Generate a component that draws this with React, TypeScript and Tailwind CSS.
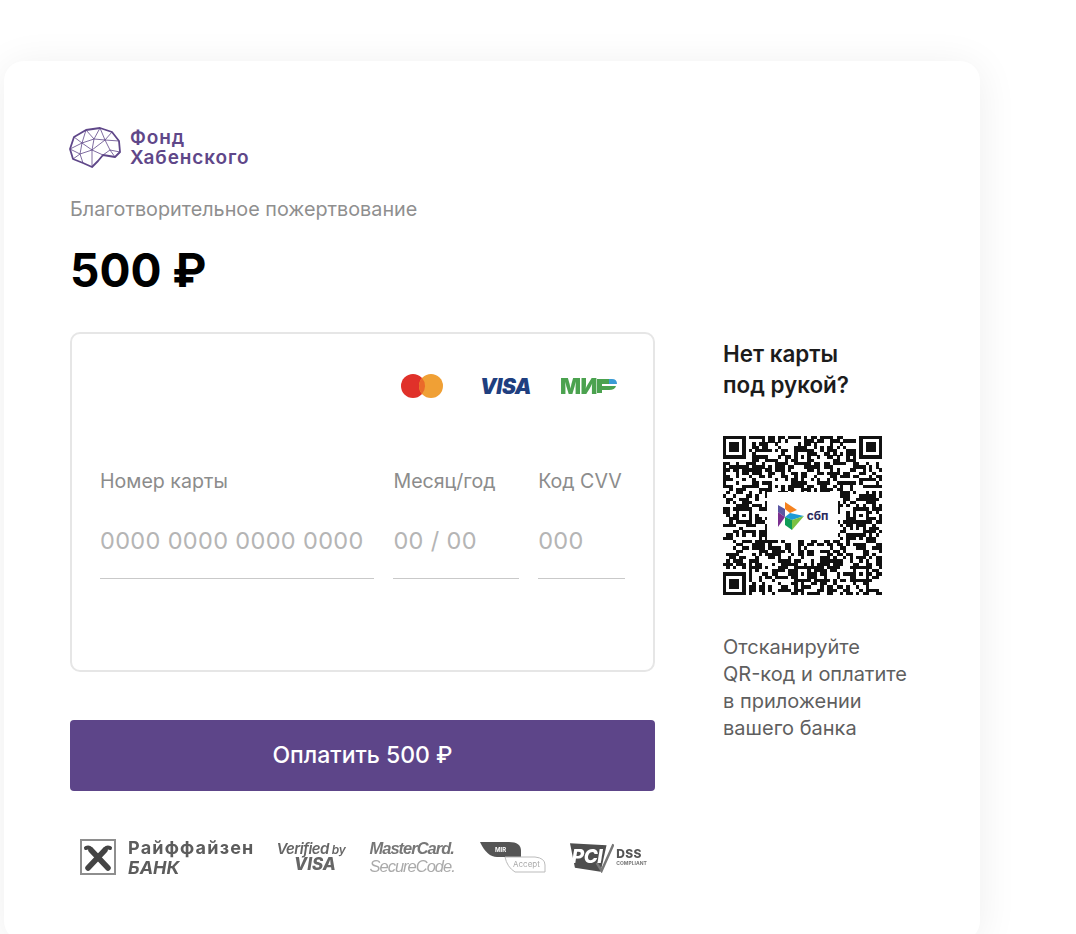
const SIZE = 49

function buildQr() {
  const grid: boolean[][] = []
  let seed = 73421
  for (let y = 0; y < SIZE; y++) {
    const row: boolean[] = []
    for (let x = 0; x < SIZE; x++) {
      seed = (seed * 1103515245 + 12345) & 0x7fffffff
      row.push(((seed >> 16) & 7) > 3)
    }
    grid.push(row)
  }
  const finder = (ox: number, oy: number) => {
    for (let y = -1; y < 8; y++) {
      for (let x = -1; x < 8; x++) {
        const px = ox + x
        const py = oy + y
        if (px < 0 || py < 0 || px >= SIZE || py >= SIZE) continue
        const ring = x >= 0 && x <= 6 && y >= 0 && y <= 6 && (x === 0 || x === 6 || y === 0 || y === 6)
        const core = x >= 2 && x <= 4 && y >= 2 && y <= 4
        grid[py][px] = ring || core
      }
    }
  }
  const align = (cx: number, cy: number) => {
    for (let y = -2; y <= 2; y++) {
      for (let x = -2; x <= 2; x++) {
        grid[cy + y][cx + x] = Math.max(Math.abs(x), Math.abs(y)) !== 1
      }
    }
  }
  finder(0, 0)
  finder(SIZE - 7, 0)
  finder(0, SIZE - 7)
  align(24, 6)
  align(6, 24)
  align(42, 24)
  align(24, 42)
  align(42, 42)
  return grid
}

function QrCode() {
  const grid = buildQr()
  return (
    <div className="relative h-[159px] w-[159px]">
      <svg viewBox={`0 0 ${SIZE} ${SIZE}`} className="h-full w-full blur-[0.5px]" shapeRendering="crispEdges">
        {grid.flatMap((row, y) =>
          row.map((on, x) => (on ? <rect key={`${x}-${y}`} x={x} y={y} width="1.02" height="1.02" fill="#111" /> : null))
        )}
      </svg>
      <div className="absolute left-[44px] top-[56px] flex h-[48px] w-[71px] items-center justify-center gap-[2px] bg-white">
        <svg viewBox="0 0 28 30" className="h-[30px] w-[28px]">
          <path d="M1 4 L8 8 L8 16 L1 11 Z" fill="#5b57a2" />
          <path d="M8 8 L8 1 L20 9 L13 12 Z" fill="#f58220" />
          <path d="M1 11 L8 16 L1 26 Z" fill="#7b2f90" />
          <path d="M8 16 L13 12 L27 15 L15 19 Z" fill="#1d9bd7" />
          <path d="M8 16 L15 19 L15 29 L8 24 Z" fill="#0f9d58" />
          <path d="M15 19 L27 15 L15 29 Z" fill="#7ac143" />
        </svg>
        <span className="text-[12px] font-bold leading-none text-[#2b2a5c]">сбп</span>
      </div>
    </div>
  )
}

function BrainLogo() {
  return (
    <svg viewBox="0 0 54 44" className="-ml-[2px] h-[44px] w-[54px] blur-[0.3px]" fill="none" stroke="#5f4789">
      <path
        d="M2 23 L6 11 L18 4 L32 2 L44 6 L51 15 L52 26 L47 31 L35 29 L30 35 L24 41 L15 37 L5 33 Z"
        strokeWidth="1.8"
        strokeLinejoin="round"
      />
      <path
        d="M6 11 L14 17 L18 4 L26 13 L32 2 L37 14 L44 6 M14 17 L26 13 L37 14 L51 15 M14 17 L2 23 L12 28 L14 17 L24 24 L26 13 M24 24 L37 14 L42 24 L52 26 M24 24 L35 29 L42 24 M12 28 L24 24 L24 41 M12 28 L15 37 M12 28 L5 33 M42 24 L47 31"
        strokeWidth="0.8"
      />
    </svg>
  )
}

function MirLogo() {
  return (
    <div className="flex h-[18px] w-[58px] items-center justify-end blur-[0.3px]">
      <span className="text-[22px] font-black leading-none tracking-[-0.5px] text-[#4ba24f]">МИ</span>
      <svg viewBox="0 0 20 16" className="h-[16px] w-[20px]">
        <path d="M0 1 H12 V6 H0 Z" fill="#4ba24f" />
        <path d="M12 1 H15 Q20 1 20 6 H12 Z" fill="#3a9bd4" />
        <path d="M0 6 H5 V8 H19 Q18 12 12 12 H5 V15 H0 Z" fill="#4ba24f" />
      </svg>
    </div>
  )
}

function CardBrands() {
  return (
    <div className="flex h-[26px] items-center justify-end">
      <svg viewBox="0 0 42 24" className="h-[24px] w-[42px] blur-[0.3px]">
        <circle cx="12" cy="12" r="12" fill="#e0312a" />
        <circle cx="30" cy="12" r="12" fill="#f0a035" />
        <path d="M21 4 A12 12 0 0 1 21 20 A12 12 0 0 1 21 4 Z" fill="#ea6a2a" />
      </svg>
      <span className="ml-[37px] text-[21px] font-black italic leading-none tracking-[-0.5px] text-[#1f3f7f]">VISA</span>
      <div className="ml-[28px]">
        <MirLogo />
      </div>
    </div>
  )
}

function Field({ label, placeholder, className }: { label: string; placeholder: string; className: string }) {
  return (
    <div className={className}>
      <div className="text-[19.6px] leading-[24px] text-[#8c8c8c]">{label}</div>
      <div className="mt-[28px] h-[58px] border-b border-[#c9c9c9] pt-[5px] text-[23.5px] leading-[30px] tracking-[0.35px] text-[#b5b5b5]">
        {placeholder}
      </div>
    </div>
  )
}

function TrustLogos() {
  return (
    <div className="mt-[46px] flex items-center pl-[10px] text-[#5c5c5c] blur-[0.4px]">
      <div className="flex h-[36px] w-[36px] items-center justify-center border-2 border-[#8e8e8e]">
        <svg viewBox="0 0 30 30" className="h-[30px] w-[30px]" stroke="#444" strokeLinecap="round" fill="none">
          <path d="M5 26 L22 8" strokeWidth="5.5" />
          <path d="M25 26 L8 8" strokeWidth="5.5" />
          <path d="M21 9 Q23 4 27 6 M9 9 Q7 4 3 6" strokeWidth="4" />
        </svg>
      </div>
      <div className="ml-[12px] flex flex-col font-bold">
        <span className="text-[18px] leading-[21px] tracking-[1.2px]">Райффайзен</span>
        <span className="text-[18px] italic leading-[19px]">БАНК</span>
      </div>
      <div className="ml-[22px] flex flex-col items-center italic leading-none text-[#666]">
        <div className="flex items-baseline gap-[3px]">
          <span className="text-[15px] font-semibold tracking-[-0.6px]">Verified</span>
          <span className="text-[12px] font-semibold tracking-[-0.3px]">by</span>
        </div>
        <span className="ml-[8px] text-[17px] font-extrabold">VISA</span>
      </div>
      <div className="ml-[24px] flex flex-col font-['Liberation_Sans',sans-serif] text-[16.5px] italic leading-[18px] tracking-[-1px]">
        <span className="font-bold text-[#777]">MasterCard.</span>
        <span className="text-[#aaa]">SecureCode.</span>
      </div>
      <svg viewBox="0 0 68 32" className="ml-[24px] h-[32px] w-[68px]">
        <path d="M1 1 H30 Q42 1 42 10 V16 H18 Q8 16 1 1 Z" fill="#555" />
        <text x="16" y="11" fontSize="6" fontWeight="700" fill="#fff" fontFamily="Inter, sans-serif">MIR</text>
        <path d="M26 16 H56 Q66 17 66 24 V31 H36 Q28 26 26 16 Z" fill="#fff" stroke="#bbb" strokeWidth="1" />
        <text x="34" y="26" fontSize="8" fill="#aaa" fontFamily="Inter, sans-serif">Accept</text>
      </svg>
      <div className="relative ml-[22px] flex h-[32px] w-[78px] items-center">
        <svg viewBox="0 0 46 32" className="h-[32px] w-[46px]">
          <path d="M1 2 L38 4 L32 31 L6 27 Z" fill="#4e4e4e" />
          <path d="M28 22 L33 30 L45 3" stroke="#777" strokeWidth="2.5" fill="none" />
        </svg>
        <span className="absolute left-[3px] top-[6px] text-[19px] font-extrabold italic leading-none tracking-[-0.5px] text-white">PCI</span>
        <div className="ml-[2px] flex flex-col leading-none">
          <span className="text-[12px] font-extrabold tracking-[0.3px] text-[#555]">DSS</span>
          <span className="mt-[1px] text-[5px] font-bold text-[#777]">COMPLIANT</span>
        </div>
      </div>
    </div>
  )
}

export default function App() {
  return (
    <div className="h-[934px] w-[1076px] overflow-hidden bg-white pl-[4px] pt-[61px] font-['Inter',sans-serif]">
      <div className="h-[880px] w-[976px] rounded-[20px] bg-white pl-[66px] pt-[65px] shadow-[0_4px_40px_rgba(0,0,0,0.07)]">
        <div className="flex h-[44px] items-center">
          <BrainLogo />
          <div className="ml-[8px] flex flex-col text-[19px] font-semibold leading-[20px] tracking-[0.9px] text-[#5f4789]">
            <span>Фонд</span>
            <span>Хабенского</span>
          </div>
        </div>
        <p className="mt-[27px] text-[19.8px] leading-[24px] text-[#8f8f8f]">Благотворительное пожертвование</p>
        <p className="mt-[21px] text-[46px] font-bold leading-[56px] text-black">500 ₽</p>
        <div className="mt-[34px] flex">
          <div className="w-[585px]">
            <div className="h-[340px] rounded-[10px] border-2 border-[#e6e6e6] pl-[28px] pr-[28px] pt-[39px]">
              <div className="pr-[8px]">
                <CardBrands />
              </div>
              <div className="mt-[70px] flex gap-[19px]">
                <Field label="Номер карты" placeholder="0000 0000 0000 0000" className="w-[275px] whitespace-nowrap" />
                <Field label="Месяц/год" placeholder="00 / 00" className="w-[126px] whitespace-nowrap" />
                <Field label="Код CVV" placeholder="000" className="w-[87px] whitespace-nowrap" />
              </div>
            </div>
            <button className="mt-[48px] h-[71px] w-full rounded-[4px] bg-[#5d4589] text-[23px] font-medium text-white">
              Оплатить 500 ₽
            </button>
            <TrustLogos />
          </div>
          <div className="ml-[68px] w-[220px]">
            <p className="pt-[6px] text-[22.4px] font-semibold leading-[31px] text-[#1c1c1c]">
              Нет карты
              <br />
              под рукой?
            </p>
            <div className="mt-[36px]">
              <QrCode />
            </div>
            <p className="mt-[39px] text-[20px] leading-[27px] text-[#5f5f5f]">
              Отсканируйте
              <br />
              QR-код и оплатите
              <br />
              в приложении
              <br />
              вашего банка
            </p>
          </div>
        </div>
      </div>
    </div>
  )
}
